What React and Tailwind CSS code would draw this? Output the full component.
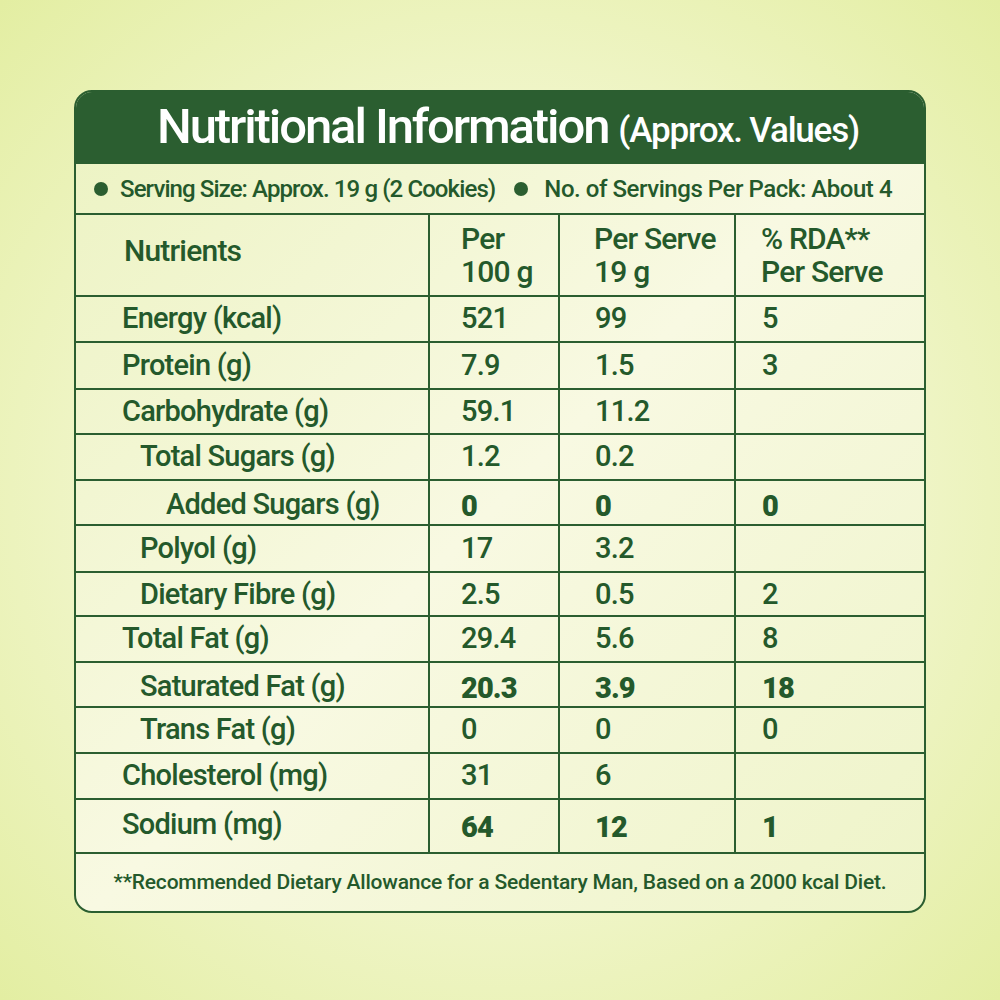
const rows = [
  { label: "Energy (kcal)", a: "521", b: "99", c: "5", pad: "pl-[46px]", h: "h-[46px]" },
  { label: "Protein (g)", a: "7.9", b: "1.5", c: "3", pad: "pl-[46px]", h: "h-[47px]" },
  { label: "Carbohydrate (g)", a: "59.1", b: "11.2", c: "", pad: "pl-[46px]", h: "h-[45px]" },
  { label: "Total Sugars (g)", a: "1.2", b: "0.2", c: "", pad: "pl-[64px]", h: "h-[46px]" },
  { label: "Added Sugars (g)", a: "0", b: "0", c: "0", pad: "pl-[90px]", h: "h-[45px]", bold: true },
  { label: "Polyol (g)", a: "17", b: "3.2", c: "", pad: "pl-[64px]", h: "h-[47px]" },
  { label: "Dietary Fibre (g)", a: "2.5", b: "0.5", c: "2", pad: "pl-[64px]", h: "h-[44px]" },
  { label: "Total Fat (g)", a: "29.4", b: "5.6", c: "8", pad: "pl-[46px]", h: "h-[46px]" },
  { label: "Saturated Fat (g)", a: "20.3", b: "3.9", c: "18", pad: "pl-[64px]", h: "h-[45px]", bold: true },
  { label: "Trans Fat (g)", a: "0", b: "0", c: "0", pad: "pl-[64px]", h: "h-[46px]" },
  { label: "Cholesterol (mg)", a: "31", b: "6", c: "", pad: "pl-[46px]", h: "h-[46px]" },
  { label: "Sodium (mg)", a: "64", b: "12", c: "1", pad: "pl-[46px] pb-[2px]", h: "h-[54px]", bold: true },
];

function Bullet() {
  return <span className="inline-block w-[14px] h-[14px] rounded-full bg-[#2b5e30] shrink-0" />;
}

function NutrientRow({ row }) {
  const val = row.bold ? "font-black tracking-[-0.9px] pt-[4px]" : "";
  return (
    <div className={`grid grid-cols-[352px_130px_176px_1fr] border-b-2 border-[#2b5e30] ${row.h}`}>
      <div className={`flex items-center ${row.pad}`}>{row.label}</div>
      <div className={`flex items-center border-l-2 border-[#2b5e30] pl-[31px] ${val}`}>{row.a}</div>
      <div className={`flex items-center border-l-2 border-[#2b5e30] pl-[35px] ${val}`}>{row.b}</div>
      <div className={`flex items-center border-l-2 border-[#2b5e30] pl-[26px] ${val}`}>{row.c}</div>
    </div>
  );
}

export default function App() {
  return (
    <div className="w-[1000px] h-[1000px] bg-[radial-gradient(circle_at_50%_50%,#fbfce9_0%,#f3f7d2_45%,#e3eea2_100%)] pt-[90px] flex justify-center items-start font-['Roboto','Liberation_Sans',sans-serif] font-medium text-[#24592b]">
      <div className="w-[852px] border-2 border-[#2b5e30] rounded-[18px] overflow-hidden bg-[linear-gradient(135deg,#ecf3c2_0%,#f8f9e2_50%,#eef4c8_100%)]">
        {/* title bar */}
        <div className="h-[72px] bg-[#2b5e30] flex items-center justify-center pb-[4px] pl-[16px] text-white whitespace-nowrap">
          <span className="text-[49px] font-medium leading-none tracking-[-2.1px]">Nutritional Information</span>
          <span className="text-[35px] leading-none ml-[10px] mt-[8px] tracking-[-1.2px]">(Approx. Values)</span>
        </div>

        {/* serving info */}
        <div className="h-[51px] border-b-2 border-[#2b5e30] flex items-center pl-[18px] text-[24px] whitespace-nowrap">
          <Bullet />
          <span className="ml-[12px] tracking-[-0.9px]">Serving Size: Approx. 19 g (2 Cookies)</span>
          <span className="ml-[19px] flex"><Bullet /></span>
          <span className="ml-[16px] tracking-[-0.45px]">No. of Servings Per Pack: About 4</span>
        </div>

        {/* table head */}
        <div className="grid grid-cols-[352px_130px_176px_1fr] border-b-2 border-[#2b5e30] h-[82px] text-[30px] leading-[33px] tracking-[-0.8px]">
          <div className="flex items-center pl-[48px] pb-[10px]">Nutrients</div>
          <div className="flex flex-col justify-center border-l-2 border-[#2b5e30] pl-[31px]">
            <span>Per</span>
            <span>100 g</span>
          </div>
          <div className="flex flex-col justify-center border-l-2 border-[#2b5e30] pl-[34px]">
            <span>Per Serve</span>
            <span>19 g</span>
          </div>
          <div className="flex flex-col justify-center border-l-2 border-[#2b5e30] pl-[25px]">
            <span>% RDA**</span>
            <span>Per Serve</span>
          </div>
        </div>

        {/* rows */}
        <div className="text-[29px] tracking-[-0.75px]">
          {rows.map((row) => (
            <NutrientRow key={row.label} row={row} />
          ))}
        </div>

        {/* footnote */}
        <div className="h-[57px] flex items-center justify-center text-[21px] tracking-[-0.2px] whitespace-nowrap">
          **Recommended Dietary Allowance for a Sedentary Man, Based on a 2000 kcal Diet.
        </div>
      </div>
    </div>
  );
}
